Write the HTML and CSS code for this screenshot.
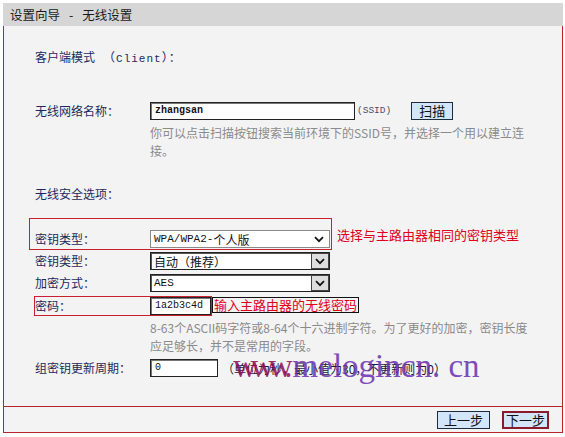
FILE: index.html
```html
<!DOCTYPE html>
<html lang="zh-CN">
<head>
<meta charset="utf-8">
<title>设置向导 - 无线设置</title>
<link rel="stylesheet" href="styles.css">
</head>
<body>
<div class="wizard">
  <div class="title">设置向导<span class="dash">-</span>无线设置</div>
  <div class="panel">
    <div class="body">
      <div class="section">客户端模式<span class="client">（<span class="mono">Client</span>）：</span></div>

      <div class="row ssid-row">
        <span class="label">无线网络名称：</span>
        <span class="input ssid">zhangsan</span>
        <span class="ssid-tag">(SSID)</span>
        <span class="btn scan">扫描</span>
      </div>
      <div class="hint">你可以点击扫描按钮搜索当前环境下的SSID号，并选择一个用以建立连<br>接。</div>

      <div class="section security">无线安全选项：</div>

      <div class="hl-row">
        <div class="redbox">
          <span class="label">密钥类型：</span>
          <span class="select modern"><span class="mono-l">WPA/WPA2-</span>个人版
            <svg class="chev" width="10" height="7" viewBox="0 0 10 7"><path d="M1 1.2 L5 5.2 L9 1.2" fill="none" stroke="#111" stroke-width="1.7"/></svg>
          </span>
        </div>
        <span class="note">选择与主路由器相同的密钥类型</span>
      </div>

      <div class="row r2">
        <span class="label">密钥类型：</span>
        <span class="select classic"><span class="val">自动（推荐）</span>
          <span class="drop"><svg width="10" height="7" viewBox="0 0 10 7"><path d="M1 1.2 L5 5.2 L9 1.2" fill="none" stroke="#111" stroke-width="1.7"/></svg></span>
        </span>
      </div>

      <div class="row r3">
        <span class="label">加密方式：</span>
        <span class="select classic"><span class="val mono-s">AES</span>
          <span class="drop"><svg width="10" height="7" viewBox="0 0 10 7"><path d="M1 1.2 L5 5.2 L9 1.2" fill="none" stroke="#111" stroke-width="1.7"/></svg></span>
        </span>
      </div>

      <div class="hl-row pwd-row">
        <div class="redbox small">
          <span class="label">密码：</span>
          <span class="input pwd">1a2b3c4d</span>
        </div>
        <span class="note boxed">输入主路由器的无线密码</span>
      </div>
      <div class="hint hint2">8-63个ASCII码字符或8-64个十六进制字符。为了更好的加密，密钥长度<br>应足够长，并不是常用的字段。</div>

      <div class="row gk-row">
        <span class="label">组密钥更新周期：</span>
        <span class="input gk">0</span>
        <span class="unit">（单位为秒，最小值为30，不更新则为0）</span>
      </div>
    </div>
    <div class="footer">
      <span class="btn prev">上一步</span>
      <span class="btn next">下一步</span>
    </div>
  </div>
  <div class="watermark"><span class="www">www.</span>melogincn. cn</div>
</div>
</body>
</html>
```
FILE: styles.css
```css
body {
  margin: 0;
  background: #ffffff;
  font-family: "Noto Sans CJK SC", "Noto Sans", sans-serif;
  font-size: 12px;
  color: #1d2a5c;
}

.wizard {
  position: relative;
  width: 560px;
  margin: 3px 0 0 3px;
}

.title {
  height: 23px;
  line-height: 23px;
  background: #d6d6d6;
  color: #1a1a1a;
  padding-left: 7px;
  font-size: 12.5px;
}

.title .dash {
  margin: 0 9px;
}

.panel {
  border: 1px solid #b3262e;
  border-top: none;
  background: #f4f3f3;
}

.body {
  height: 380px;
  box-sizing: border-box;
  padding: 22px 0 0 31px;
}

.mono { font-family: "Liberation Mono", monospace; font-size: 11px; }
.mono-l { font-family: "Liberation Mono", monospace; font-size: 11px; }
.mono-s { font-family: "Liberation Mono", monospace; font-size: 11px; }

.section {
  height: 18px;
  line-height: 18px;
  color: #1d2a5c;
}

.client { margin-left: 8px; letter-spacing: 1px; }

.security { margin-top: 25px; }

.row {
  display: flex;
  align-items: center;
  height: 18px;
}

.label {
  flex: none;
  width: 115px;
  color: #1d2a5c;
  line-height: 18px;
}

.input {
  box-sizing: border-box;
  height: 18px;
  border: 1px solid #222;
  box-shadow: inset 1px 1px 0 #777;
  background: #fff;
  color: #111;
  font-family: "Liberation Mono", monospace;
  font-size: 10px;
  font-weight: bold;
  line-height: 16px;
  padding-left: 4px;
}

.ssid-row { margin-top: 35px; height: 19px; }
.ssid { width: 205px; height: 18px; }
.ssid-tag {
  margin-left: 2px;
  font-family: "Liberation Mono", monospace;
  font-size: 9.5px;
  color: #4a4f6a;
}

.btn {
  box-sizing: border-box;
  height: 18px;
  line-height: 16px;
  text-align: center;
  background: #d3e5f8;
  border: 1px solid #1c2c3c;
  color: #111;
  font-size: 13px;
}

.scan { margin-left: 20px; width: 42px; font-size: 13px; }

.hint {
  margin-top: 4px;
  padding-left: 115px;
  line-height: 18px;
  color: #8a8a8a;
  white-space: nowrap;
}

.hl-row {
  display: flex;
  align-items: center;
  margin-top: 15px;
}

.redbox {
  display: flex;
  align-items: center;
  box-sizing: border-box;
  height: 32px;
  width: 303px;
  margin-left: -6px;
  padding: 11px 1px 1px 5px;
  border: 1px solid #c8202e;
}

.note {
  margin-left: 5px;
  color: #e0001b;
  font-size: 13px;
  white-space: nowrap;
}

.select {
  box-sizing: border-box;
  display: flex;
  align-items: center;
  width: 180px;
  height: 18px;
  background: #fff;
  color: #111;
}

.select.modern {
  border: 1px solid #8a8a8a;
  padding-left: 3px;
  font-size: 12px;
}

.select.modern .chev {
  margin-left: auto;
  margin-right: 5px;
}

.select.classic {
  border: 1px solid #222;
  box-shadow: inset 1px 1px 0 #555;
  padding-left: 3px;
}

.select.classic .val { flex: 1; }

.drop {
  box-sizing: border-box;
  width: 18px;
  height: 16px;
  display: flex;
  align-items: center;
  justify-content: center;
  background: #dedede;
  border: 1px solid #444;
}

.r2 { margin-top: 2px; }
.r3 { margin-top: 4px; }

.pwd-row {
  margin-top: 4px;
  align-items: flex-start;
}

.redbox.small {
  width: 178px;
  height: 20px;
  margin-left: -1px;
  padding: 0;
}

.pwd {
  width: 61px;
  height: 18px;
  font-weight: normal;
}

.note.boxed {
  margin-left: 0;
  margin-top: 1px;
  box-sizing: border-box;
  height: 16px;
  line-height: 14px;
  padding: 0 1px;
  border: 1px solid #111;
}

.hint2 { margin-top: 3px; }

.gk-row { margin-top: 4px; }
.gk { width: 68px; font-weight: normal; }

.unit {
  margin-left: 4px;
  color: #1a1a3a;
  white-space: nowrap;
}

.footer {
  box-sizing: border-box;
  height: 26px;
  border-top: 1px solid #b3262e;
  display: flex;
  justify-content: flex-end;
  align-items: flex-start;
  gap: 12px;
  padding: 4px 13px 0 0;
}

.prev { width: 53px; }
.next { width: 47px; border: 2px solid #8b1a2a; line-height: 14px; }

.watermark {
  position: absolute;
  left: 230px;
  top: 347px;
  font-family: "Liberation Serif", serif;
  font-size: 33px;
  line-height: 33px;
  white-space: nowrap;
  color: #6a2fb0;
  opacity: 0.85;
}

.watermark .www {
  color: #8e0e5a;
  letter-spacing: -6px;
  margin-right: 6px;
}
```
